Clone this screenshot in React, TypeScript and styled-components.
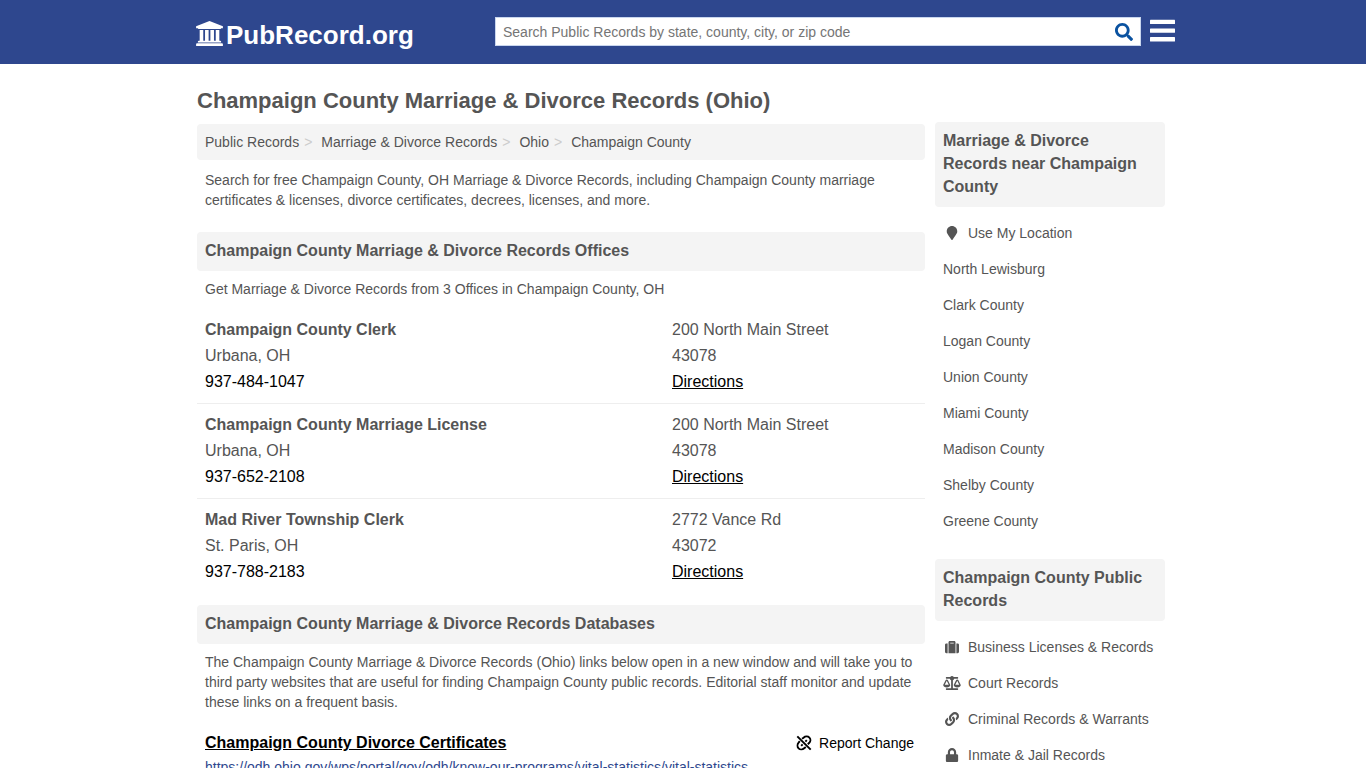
import React from "react";
import styled, { createGlobalStyle } from "styled-components";
import { FaSearch, FaMapMarker, FaSuitcase, FaBalanceScale, FaLink, FaLock } from "react-icons/fa";

const GlobalStyle = createGlobalStyle`
  * { box-sizing: border-box; }
  body {
    margin: 0;
    background: #fff;
    color: #555;
    font-family: "Liberation Sans", Arial, Helvetica, sans-serif;
    font-size: 14px;
    line-height: 20px;
  }
  a { color: inherit; text-decoration: none; }
  h1, h2, h3, p, ul, ol { margin: 0; padding: 0; }
  ul, ol { list-style: none; }
`;

const Header = styled.header`
  background: #2e478e;
  height: 64px;
`;

const HeaderInner = styled.div`
  max-width: 980px;
  height: 100%;
  margin: 0 auto;
  padding: 0 0 2px 3px;
  display: flex;
  align-items: center;
  justify-content: space-between;
`;

const Logo = styled.a`
  display: flex;
  align-items: center;
  gap: 3px;
  padding-top: 7px;
  color: #fff;
  font-size: 26px;
  line-height: 30px;
  font-weight: bold;
  svg { margin-bottom: 3px; }
`;

const HeaderTools = styled.div`
  display: flex;
  align-items: center;
  gap: 9px;
  width: 680px;
  margin-right: -2px;
`;

const SearchBox = styled.form`
  display: flex;
  flex: 1;
  height: 29px;
  background: #fff;
  border: 1px solid #c9d6ee;
`;

const SearchInput = styled.input`
  flex: 1;
  min-width: 0;
  border: 0;
  outline: 0;
  padding: 2px 7px 0;
  background: transparent;
  font: inherit;
  color: #555;
  &::placeholder { color: #757575; opacity: 1; }
`;

const SearchButton = styled.button`
  display: flex;
  align-items: center;
  padding: 2px 7px 0;
  border: 0;
  background: none;
  color: #0a52a0;
  svg { width: 18px; height: 18px; }
`;

const MenuButton = styled.button`
  display: flex;
  padding: 0;
  border: 0;
  background: none;
  color: #fff;
`;

const Page = styled.div`
  max-width: 980px;
  margin: 0 auto;
  padding: 22px 8px 0 4px;
`;

const Title = styled.h1`
  font-size: 22px;
  line-height: 30px;
`;

const Columns = styled.div`
  display: flex;
  align-items: flex-start;
  gap: 10px;
  padding-top: 6px;
`;

const Main = styled.main`
  flex: 1;
  min-width: 0;
  padding-top: 2px;
`;

const Breadcrumb = styled.ol`
  display: flex;
  padding: 8px;
  background: #f4f4f4;
  border-radius: 4px;
`;

const Crumb = styled.li`
  & + &::before {
    content: ">";
    color: #ccc;
    padding: 0 9px 0 5px;
  }
`;

const Text = styled.p`
  padding: 10px 8px;
`;

const SectionHeading = styled.h2`
  margin-top: 12px;
  padding: 7px 8px 9px;
  background: #f4f4f4;
  border-radius: 4px;
  font-size: 16px;
  line-height: 23px;
`;

const SectionText = styled(Text)`
  padding-top: 8px;
`;

const SideHeading = styled(SectionHeading)`
  margin: 0 0 8px;
`;

const Office = styled.li`
  display: flex;
  padding: 8px;
  font-size: 16px;
  line-height: 26px;
  & + & { border-top: 1px solid #eee; }
`;

const OfficeColumn = styled.div<{ $grow?: boolean }>`
  flex: ${(p) => (p.$grow ? "1" : "0 0 245px")};
  display: flex;
  flex-direction: column;
  align-items: flex-start;
`;

const OfficeName = styled.h3`
  font-size: 16px;
`;

const Phone = styled.a`
  color: #000;
`;

const Directions = styled.a`
  color: #000;
  text-decoration: underline;
`;

const Database = styled.article`
  padding: 11px 8px;
`;

const DatabaseHead = styled.div`
  display: flex;
  align-items: center;
  justify-content: space-between;
  padding-right: 3px;
  color: #000;
`;

const DatabaseTitle = styled.h3`
  font-size: 16px;
  line-height: 20px;
  text-decoration: underline;
`;

const ReportButton = styled.button`
  display: flex;
  align-items: center;
  gap: 7px;
  padding: 0;
  border: 0;
  background: none;
  color: #000;
  font: inherit;
`;

const DatabaseUrl = styled.a`
  display: block;
  padding-top: 4px;
  color: #2e478e;
`;

const Sidebar = styled.aside`
  flex: 0 0 230px;
`;

const SideList = styled.ul`
  margin-bottom: 20px;
`;

const SideLink = styled.a`
  display: flex;
  align-items: center;
  gap: 7px;
  padding: 8px;
  svg { width: 18px; height: 14px; }
`;

const BuildingIcon = () => (
  <svg width="27" height="25" viewBox="0 0 1920 1792" fill="currentColor" aria-hidden="true">
    <path d="M960 0l960 384v128h-128q0 26-20.500 45t-48.500 19H197q-28 0-48.500-19T128 512H0V384zM256 640h256v768h128V640h256v768h128V640h256v768h128V640h256v768h59q28 0 48.500 19t20.500 45v64H128v-64q0-26 20.500-45t48.500-19h59zM1851 1600q28 0 48.500 19t20.500 45v128H0v-128q0-26 20.500-45t48.500-19z" />
  </svg>
);

const MenuIcon = () => (
  <svg width="25" height="24" viewBox="0 0 25 24" fill="currentColor" aria-hidden="true">
    <rect y="0.700" width="25" height="4.400" rx="0.500" />
    <rect y="9.400" width="25" height="4.400" rx="0.500" />
    <rect y="18.100" width="25" height="4.400" rx="0.500" />
  </svg>
);

const BrokenLinkIcon = () => (
  <svg width="16" height="16" viewBox="0 0 16 16" fill="none" stroke="currentColor" strokeWidth="1.900" aria-hidden="true">
    <path d="M1.300 1.300L14.700 14.700" />
    <path d="M6 3.800L7.500 2.700C9.300 1.200 12 1.200 13.400 2.600C14.800 4 14.700 6.400 13.300 7.800L11.800 9.200" />
    <path d="M3.800 6.200L2.600 7.700C1.200 9.300 1.200 12 2.600 13.400C4 14.800 6.600 14.700 8.200 13.300L9.800 12" />
    <path d="M10.800 5.200L9.400 6.600M5.200 10.800L6.600 9.400" />
  </svg>
);

const offices = [
  { name: "Champaign County Clerk", city: "Urbana, OH", phone: "937-484-1047", street: "200 North Main Street", zip: "43078" },
  { name: "Champaign County Marriage License", city: "Urbana, OH", phone: "937-652-2108", street: "200 North Main Street", zip: "43078" },
  { name: "Mad River Township Clerk", city: "St. Paris, OH", phone: "937-788-2183", street: "2772 Vance Rd", zip: "43072" },
];

const crumbs = ["Public Records", "Marriage & Divorce Records", "Ohio", "Champaign County"];

const places = [
  "North Lewisburg", "Clark County", "Logan County", "Union County",
  "Miami County", "Madison County", "Shelby County", "Greene County",
];

const recordLinks = [
  { label: "Business Licenses & Records", Icon: FaSuitcase },
  { label: "Court Records", Icon: FaBalanceScale },
  { label: "Criminal Records & Warrants", Icon: FaLink },
  { label: "Inmate & Jail Records", Icon: FaLock },
];

export default function App() {
  return (
    <>
      <GlobalStyle />
      <Header>
        <HeaderInner>
          <Logo href="#"><BuildingIcon />PubRecord.org</Logo>
          <HeaderTools>
            <SearchBox>
              <SearchInput type="text" aria-label="Search Public Records" placeholder="Search Public Records by state, county, city, or zip code" />
              <SearchButton type="button" aria-label="Search"><FaSearch /></SearchButton>
            </SearchBox>
            <MenuButton type="button" aria-label="Menu"><MenuIcon /></MenuButton>
          </HeaderTools>
        </HeaderInner>
      </Header>
      <Page>
        <Title>Champaign County Marriage &amp; Divorce Records (Ohio)</Title>
        <Columns>
          <Main>
            <Breadcrumb>
              {crumbs.map((c) => <Crumb key={c}><a href="#">{c}</a></Crumb>)}
            </Breadcrumb>
            <Text>
              Search for free Champaign County, OH Marriage &amp; Divorce Records, including Champaign County marriage
              certificates &amp; licenses, divorce certificates, decrees, licenses, and more.
            </Text>
            <SectionHeading>Champaign County Marriage &amp; Divorce Records Offices</SectionHeading>
            <SectionText>Get Marriage &amp; Divorce Records from 3 Offices in Champaign County, OH</SectionText>
            <ul>
              {offices.map((o) => (
                <Office key={o.name}>
                  <OfficeColumn $grow>
                    <OfficeName>{o.name}</OfficeName>
                    <span>{o.city}</span>
                    <Phone href="#">{o.phone}</Phone>
                  </OfficeColumn>
                  <OfficeColumn>
                    <span>{o.street}</span>
                    <span>{o.zip}</span>
                    <Directions href="#">Directions</Directions>
                  </OfficeColumn>
                </Office>
              ))}
            </ul>
            <SectionHeading>Champaign County Marriage &amp; Divorce Records Databases</SectionHeading>
            <SectionText>
              The Champaign County Marriage &amp; Divorce Records (Ohio) links below open in a new window and will take you to
              third party websites that are useful for finding Champaign County public records. Editorial staff monitor and update
              these links on a frequent basis.
            </SectionText>
            <Database>
              <DatabaseHead>
                <DatabaseTitle><a href="#">Champaign County Divorce Certificates</a></DatabaseTitle>
                <ReportButton type="button"><BrokenLinkIcon />Report Change</ReportButton>
              </DatabaseHead>
              <DatabaseUrl href="#">https://odh.ohio.gov/wps/portal/gov/odh/know-our-programs/vital-statistics/vital-statistics</DatabaseUrl>
            </Database>
          </Main>
          <Sidebar>
            <SideHeading>Marriage &amp; Divorce Records near Champaign County</SideHeading>
            <SideList>
              <li><SideLink href="#"><FaMapMarker />Use My Location</SideLink></li>
              {places.map((p) => <li key={p}><SideLink href="#">{p}</SideLink></li>)}
            </SideList>
            <SideHeading>Champaign County Public Records</SideHeading>
            <SideList>
              {recordLinks.map(({ label, Icon }) => (
                <li key={label}><SideLink href="#"><Icon />{label}</SideLink></li>
              ))}
            </SideList>
          </Sidebar>
        </Columns>
      </Page>
    </>
  );
}
